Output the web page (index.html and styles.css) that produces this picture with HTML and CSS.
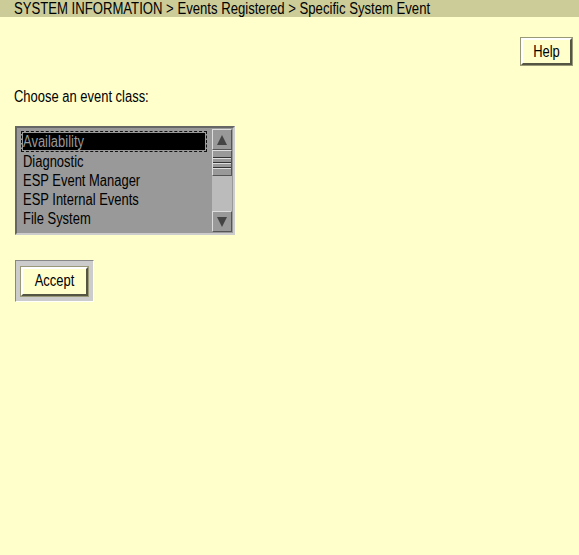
FILE: index.html
```html
<!DOCTYPE html>
<html>
<head>
<meta charset="utf-8">
<link rel="stylesheet" href="styles.css">
</head>
<body>
<div class="crumbs"><span class="t wide">SYSTEM INFORMATION &gt; Events Registered &gt; Specific System Event</span></div>
<div class="toolbar"><button class="btn help"><span class="t c">Help</span></button></div>
<p class="prompt"><span class="t">Choose an event class:</span></p>
<div class="listbox">
  <ul class="items">
    <li class="sel"><span class="t">Availability</span></li>
    <li><span class="t">Diagnostic</span></li>
    <li><span class="t">ESP Event Manager</span></li>
    <li><span class="t">ESP Internal Events</span></li>
    <li><span class="t">File System</span></li>
  </ul>
  <div class="scroll">
    <div class="sbtn up"><span class="tri-up"></span></div>
    <div class="track">
      <div class="thumb"><i></i><i></i><i></i></div>
    </div>
    <div class="sbtn down"><span class="tri-down"></span></div>
  </div>
</div>
<div class="accept-ring"><button class="btn accept"><span class="t c">Accept</span></button></div>
</body>
</html>
```
FILE: styles.css
```css
html, body { margin: 0; padding: 0; }
body {
  background: #ffffcc;
  font-family: "Liberation Sans", Arial, sans-serif;
  font-size: 16px;
  color: #000;
  width: 579px;
  height: 555px;
  overflow: hidden;
}
.t {
  display: inline-block;
  white-space: nowrap;
  transform: scaleX(0.81);
  transform-origin: 0 50%;
}
.t.c { transform-origin: 50% 50%; }
.t.wide { transform: scaleX(0.82); }
.crumbs {
  background: #cccc99;
  height: 17px;
  line-height: 17px;
  padding-left: 14px;
  white-space: nowrap;
  overflow: hidden;
}
.toolbar {
  display: flex;
  justify-content: flex-end;
  padding: 21px 7px 0 0;
}
.btn {
  font-family: "Liberation Sans", Arial, sans-serif;
  font-size: 16px;
  background: #ffffcc;
  color: #000;
  border: 2px solid;
  border-color: #ffffff #555544 #555544 #ffffff;
  box-shadow: inset 0 0 0 1px #ffffcc, 0 0 0 1px #999977;
  padding: 0;
  margin: 0;
  line-height: 18px;
}
.help {
  width: 51px;
  height: 27px;
}
.prompt {
  margin: 23px 0 0 14px;
  height: 17px;
  line-height: 17px;
}
.listbox {
  margin: 21px 0 0 15px;
  width: 220px;
  height: 109px;
  box-sizing: border-box;
  background: #999999;
  border: 2px solid;
  border-color: #666666 #cccccc #cccccc #666666;
  display: flex;
  padding: 1px 1px 1px 4px;
}
.items {
  list-style: none;
  margin: 0;
  padding: 4px 0 0 0;
  flex: 1;
}
.items li {
  height: 19px;
  line-height: 19px;
  padding-left: 2px;
  white-space: nowrap;
}
.items li.sel {
  height: 17px;
  line-height: 17px;
  margin-bottom: 2px;
  padding-left: 0;
  margin-left: 2px;
  background: #000;
  color: #999999;
  box-shadow: 0 0 0 1px #999999;
  outline: 1px dashed #111;
  outline-offset: 1px;
  margin-right: 3px;
}
.scroll {
  width: 20px;
  display: flex;
  flex-direction: column;
  background: #aaaaaa;
  margin-left: 4px;
}
.sbtn {
  height: 19px;
  background: #999999;
  border: 1px solid;
  border-color: #dddddd #555555 #555555 #dddddd;
  display: flex;
  align-items: center;
  justify-content: center;
}
.tri-up {
  width: 0; height: 0;
  border-left: 5px solid transparent;
  border-right: 5px solid transparent;
  border-bottom: 10px solid #444444;
}
.tri-down {
  width: 0; height: 0;
  border-left: 5px solid transparent;
  border-right: 5px solid transparent;
  border-top: 10px solid #444444;
}
.track {
  flex: 1;
  background: #bbbbbb;
}
.thumb {
  height: 24px;
  background: #999999;
  border: 1px solid;
  border-color: #dddddd #555555 #555555 #dddddd;
  display: flex;
  flex-direction: column;
  justify-content: center;
  gap: 3px;
}
.thumb i {
  display: block;
  height: 1px;
  background: #333333;
  border-bottom: 1px solid #dddddd;
}
.accept-ring {
  margin: 25px 0 0 15px;
  width: 79px;
  height: 42px;
  box-sizing: border-box;
  background: #cccccc;
  border: 1px solid;
  border-color: #888888 #ffffff #ffffff #888888;
  display: flex;
  align-items: center;
  justify-content: center;
}
.accept {
  width: 67px;
  height: 29px;
}
```
